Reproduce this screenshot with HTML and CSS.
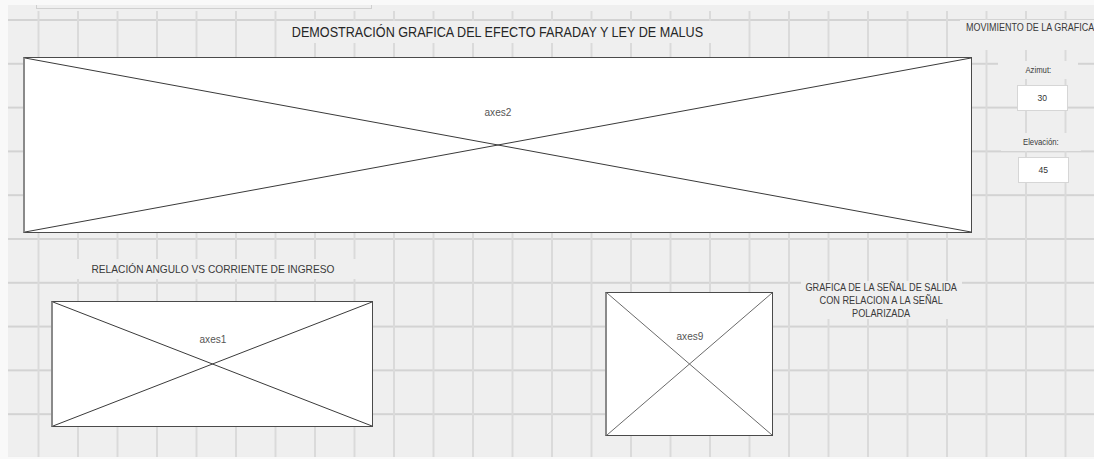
FILE: index.html
```html
<!DOCTYPE html>
<html lang="es">
<head>
<meta charset="utf-8">
<title>GUIDE layout</title>
<link rel="stylesheet" href="styles.css">
</head>
<body>
<div class="canvas">
  <div class="panel-top"></div>

  <div class="stext title"><span class="sx">DEMOSTRACIÓN GRAFICA DEL EFECTO FARADAY Y LEY DE MALUS</span></div>

  <div class="axes axes2">
    <svg class="cross" viewBox="0 0 100 100" preserveAspectRatio="none"><line x1="0" y1="0" x2="100" y2="100"/><line x1="0" y1="100" x2="100" y2="0"/></svg>
    <span class="axlabel"><span class="sx">axes2</span></span>
  </div>

  <div class="stext mov"><span class="sx sxl">MOVIMIENTO DE LA GRAFICA</span></div>
  <div class="stext small azlab"><span class="sx">Azimut:</span></div>
  <div class="edit ed30"><span class="sx">30</span></div>
  <div class="stext small ellab"><span class="sx">Elevación:</span></div>
  <div class="edit ed45"><span class="sx">45</span></div>

  <div class="stext rel"><span class="sx">RELACIÓN ANGULO VS CORRIENTE DE INGRESO</span></div>

  <div class="axes axes1">
    <svg class="cross" viewBox="0 0 100 100" preserveAspectRatio="none"><line x1="0" y1="0" x2="100" y2="100"/><line x1="0" y1="100" x2="100" y2="0"/></svg>
    <span class="axlabel"><span class="sx">axes1</span></span>
  </div>

  <div class="axes axes9">
    <svg class="cross" viewBox="0 0 100 100" preserveAspectRatio="none"><line x1="0" y1="0" x2="100" y2="100"/><line x1="0" y1="100" x2="100" y2="0"/></svg>
    <span class="axlabel"><span class="sx">axes9</span></span>
  </div>

  <div class="stext graf"><span class="sx">GRAFICA DE LA SEÑAL DE SALIDA<br>CON RELACION A LA SEÑAL<br>POLARIZADA</span></div>
</div>
</body>
</html>
```
FILE: styles.css
```css
html, body {
  margin: 0;
  padding: 0;
  background: #f9f9f9;
}

body {
  width: 1094px;
  height: 459px;
  overflow: hidden;
  font-family: "Liberation Sans", Arial, sans-serif;
  color: #333;
}

.canvas {
  position: relative;
  margin: 5px 0 0 8px;
  width: 1086px;
  height: 452px;
  overflow: hidden;
  background-color: #efefef;
  background-image:
    linear-gradient(180deg, #efefef 6px, transparent 6px),
    linear-gradient(90deg, #dadada 2px, transparent 2px),
    linear-gradient(180deg, #d3d3d3 2px, transparent 2px);
  background-size: 100% 100%, 39.5px 100%, 100% 43.8px;
  background-position: 0 0, 29.5px 0, 0 14px;
  background-repeat: no-repeat, repeat, repeat;
}

.panel-top {
  position: absolute;
  left: 28px;
  top: -10px;
  width: 334px;
  height: 12px;
  background: #efefef;
  border: 1px solid #d0d0d0;
}

.sx {
  display: inline-block;
  flex: none;
  transform: scaleX(0.9);
  transform-origin: center;
  white-space: nowrap;
}

.sxl {
  transform-origin: left center;
}

.stext {
  position: absolute;
  display: flex;
  justify-content: center;
  align-items: flex-start;
  background: #efefef;
  text-align: center;
  color: #3a3a3a;
}

.title {
  left: 272px;
  top: 16px;
  width: 434px;
  height: 22px;
  font-size: 14px;
  line-height: 22px;
  color: #262626;
}

.mov {
  left: 952px;
  top: 15px;
  width: 160px;
  height: 30px;
  justify-content: flex-start;
  text-align: left;
  padding-left: 6px;
  box-sizing: border-box;
  font-size: 10px;
  line-height: 16px;
}

.small {
  font-size: 8.6px;
  line-height: 18px;
  height: 18px;
  width: 80px;
}

.azlab {
  left: 990px;
  top: 56px;
}

.ellab {
  left: 993px;
  top: 128px;
}

.edit {
  position: absolute;
  display: flex;
  justify-content: center;
  width: 51px;
  height: 26px;
  box-sizing: border-box;
  background: #fff;
  border: 1px solid #d6d6d6;
  font-size: 9.5px;
  line-height: 24px;
  color: #333;
}

.ed30 {
  left: 1009px;
  top: 80px;
}

.ed45 {
  left: 1010px;
  top: 152px;
}

.rel {
  left: 47px;
  top: 254px;
  width: 315px;
  height: 20px;
  font-size: 11.3px;
  line-height: 20px;
}

.graf {
  left: 793px;
  top: 276px;
  width: 161px;
  height: 38px;
  font-size: 10.2px;
  line-height: 13px;
}

.axes {
  position: absolute;
  box-sizing: border-box;
  background: #fff;
  border: 1px solid #4a4a4a;
  border-left: 2px solid #8a8a8a;
}

.cross {
  position: absolute;
  left: 0;
  top: 0;
  width: 100%;
  height: 100%;
  display: block;
}

.cross line {
  stroke: #3a3a3a;
  stroke-width: 1;
  vector-effect: non-scaling-stroke;
}

.axes9 .cross line {
  stroke: #6a6a6a;
}

.axlabel {
  position: absolute;
  left: 0;
  right: 0;
  display: flex;
  justify-content: center;
  font-size: 11.2px;
  line-height: 14px;
  color: #555;
}

.axes2 {
  left: 15px;
  top: 52px;
  width: 949px;
  height: 176px;
}

.axes2 .axlabel {
  top: 47px;
}

.axes1 {
  left: 43px;
  top: 296px;
  width: 322px;
  height: 126px;
}

.axes1 .axlabel {
  top: 30px;
}

.axes9 {
  left: 597px;
  top: 287px;
  width: 168px;
  height: 144px;
}

.axes9 .axlabel {
  top: 36px;
}
```
